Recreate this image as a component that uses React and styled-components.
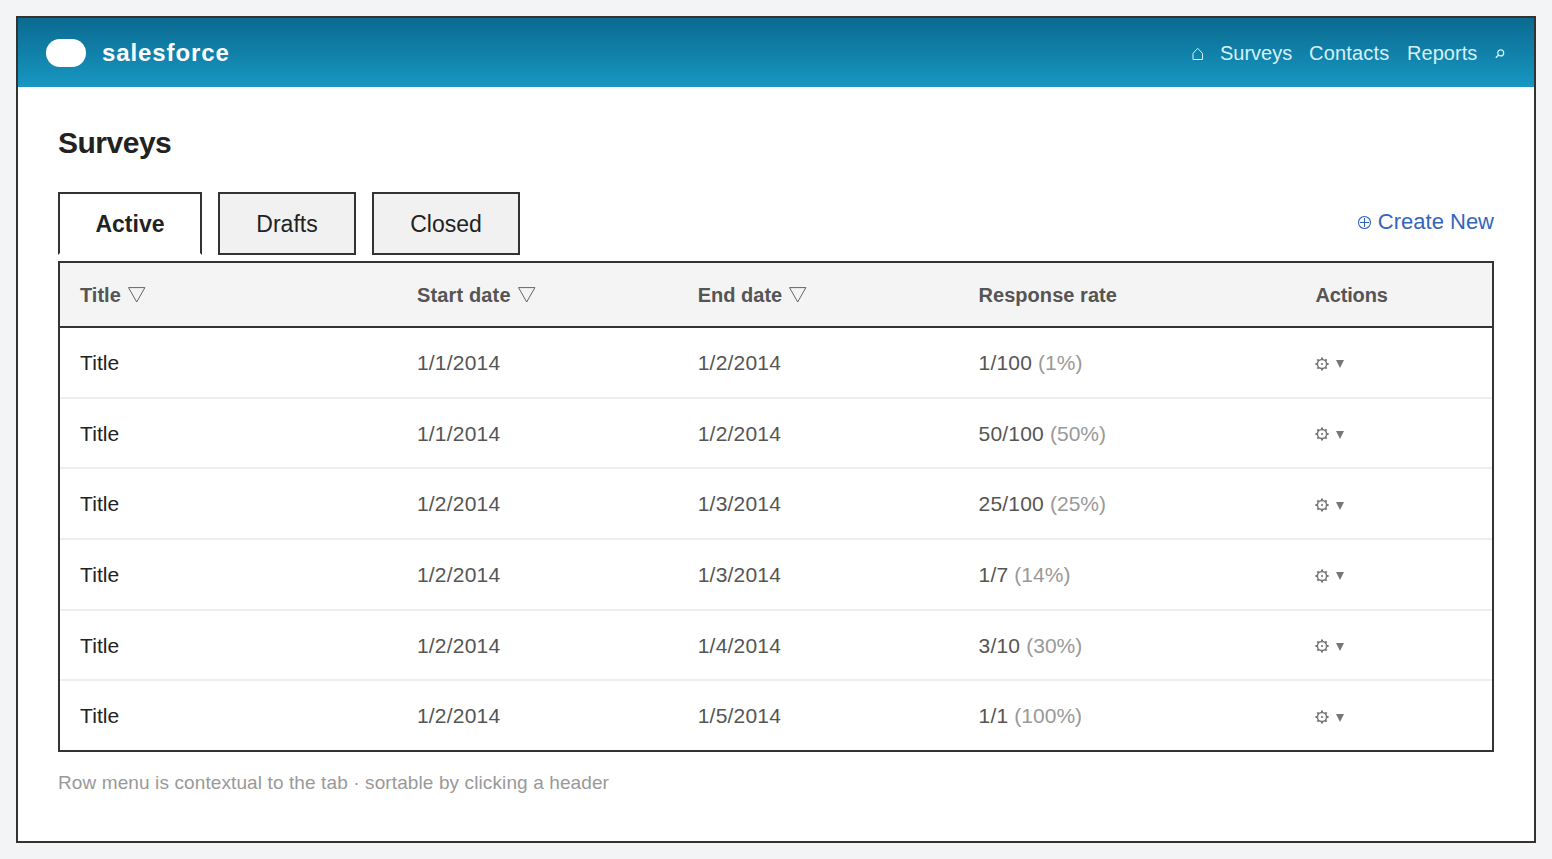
import React, { useState } from 'react';
import styled, { createGlobalStyle, css } from 'styled-components';

const TABS = [
  { name: 'Active', width: 144 },
  { name: 'Drafts', width: 138 },
  { name: 'Closed', width: 148 },
];

const COLUMNS = [
  { label: 'Title', sortable: true },
  { label: 'Start date', sortable: true, spacing: 0.15 },
  { label: 'End date', sortable: true },
  { label: 'Response rate', spacing: 0.05 },
  { label: 'Actions', spacing: -0.15 },
];

const SURVEYS = [
  { id: 1, start: '1/1/2014', end: '1/2/2014', count: '1/100', rate: '1%' },
  { id: 2, start: '1/1/2014', end: '1/2/2014', count: '50/100', rate: '50%' },
  { id: 3, start: '1/2/2014', end: '1/3/2014', count: '25/100', rate: '25%' },
  { id: 4, start: '1/2/2014', end: '1/3/2014', count: '1/7', rate: '14%' },
  { id: 5, start: '1/2/2014', end: '1/4/2014', count: '3/10', rate: '30%' },
  { id: 6, start: '1/2/2014', end: '1/5/2014', count: '1/1', rate: '100%' },
];

const HomeIcon = () => (
  <svg width="12" height="14" viewBox="0 0 12 14" fill="none">
    <path d="M2 12.5V6.4L6.7 1.3l4.8 5.1v6.1z" stroke="currentColor" />
  </svg>
);

const SearchIcon = () => (
  <svg width="10" height="10" viewBox="0 0 10 10" fill="none">
    <circle cx="5.7" cy="3.9" r="3" stroke="currentColor" strokeWidth="1.2" />
    <path d="M3.7 6L.8 8.8" stroke="currentColor" strokeWidth="1.5" />
  </svg>
);

const PlusIcon = () => (
  <svg width="14" height="14" viewBox="0 0 14 14" fill="none">
    <circle cx="7.5" cy="7.5" r="6" stroke="currentColor" strokeWidth="1.1" />
    <path d="M7.5 3v9M3 7.5h9" stroke="currentColor" strokeWidth="1.1" />
  </svg>
);

const SortIcon = () => (
  <svg width="18" height="17" viewBox="0 0 18 17" fill="none">
    <path d="M.5 .6h16.4L8.7 15z" stroke="currentColor" strokeWidth="0.9" />
  </svg>
);

const GEAR_ANGLES = [0, 45, 90, 135, 180, 225, 270, 315];

const GearIcon = () => (
  <svg width="14" height="14" viewBox="0 0 14 14" fill="none">
    <circle cx="7" cy="7" r="4.6" stroke="currentColor" strokeWidth="1.5" />
    <circle cx="7" cy="7" r="1.1" fill="currentColor" />
    {GEAR_ANGLES.map(angle => (
      <path
        key={angle}
        d="M7 2.6V.4"
        stroke="currentColor"
        strokeWidth="2"
        transform={`rotate(${angle} 7 7)`}
      />
    ))}
  </svg>
);

const CaretIcon = () => (
  <svg width="8" height="11" viewBox="0 0 8 11">
    <path d="M0 2h8L4 10z" fill="currentColor" />
  </svg>
);

const App = () => {
  const [activeTab, setActiveTab] = useState('Active');

  return (
    <>
      <GlobalStyle />
      <Frame>
        <TopBar>
          <Brand>
            <Cloud />
            <BrandName>salesforce</BrandName>
          </Brand>
          <Nav>
            <NavIcon $width={12}>
              <HomeIcon />
            </NavIcon>
            <NavLink $width={72}>Surveys</NavLink>
            <NavLink $width={81} $spacing={0.2}>
              Contacts
            </NavLink>
            <NavLink $width={71} $spacing={0.05}>
              Reports
            </NavLink>
            <NavIcon $width={10}>
              <SearchIcon />
            </NavIcon>
          </Nav>
        </TopBar>
        <Content>
          <PageTitle>Surveys</PageTitle>
          <Toolbar>
            <Tabs>
              {TABS.map(({ name, width }) => (
                <Tab
                  key={name}
                  $width={width}
                  $active={name === activeTab}
                  onClick={() => setActiveTab(name)}
                >
                  {name}
                </Tab>
              ))}
            </Tabs>
            <CreateLink>
              <PlusIcon />
              <span>Create New</span>
            </CreateLink>
          </Toolbar>
          <Table>
            <HeaderRow>
              {COLUMNS.map(({ label, sortable, spacing }) => (
                <HeaderCell key={label} $spacing={spacing}>
                  {label}
                  {sortable && <SortIcon />}
                </HeaderCell>
              ))}
            </HeaderRow>
            {SURVEYS.map(({ id, start, end, count, rate }) => (
              <Row key={id}>
                <TitleCell>Title</TitleCell>
                <Cell>{start}</Cell>
                <Cell>{end}</Cell>
                <Cell>
                  {count} <Rate>({rate})</Rate>
                </Cell>
                <ActionCell>
                  <GearIcon />
                  <CaretIcon />
                </ActionCell>
              </Row>
            ))}
          </Table>
          <Note>
            Row menu is contextual to the tab · sortable by clicking a header
          </Note>
        </Content>
      </Frame>
    </>
  );
};

const GlobalStyle = createGlobalStyle`
  * {
    box-sizing: border-box;
  }

  body {
    margin: 0;
    background-color: #f3f4f6;
    font-family: 'Liberation Sans', Arial, sans-serif;
    color: #222;
  }
`;

const FlexRow = css`
  display: flex;
  align-items: center;
`;

const Frame = styled.div`
  height: calc(100vh - 32px);
  margin: 16px;
  border: 2px solid #333;
  background-color: #fff;
`;

const TopBar = styled.header`
  ${FlexRow};
  justify-content: space-between;
  height: 69px;
  padding: 0 29px 0 28px;
  background: linear-gradient(#0b6a90, #1797c2);
`;

const Brand = styled.div`
  ${FlexRow};
  gap: 16px;
`;

const Cloud = styled.span`
  width: 40px;
  height: 28px;
  border-radius: 14px;
  background-color: #fff;
`;

const BrandName = styled.span`
  color: #fff;
  font-size: 24px;
  font-weight: 700;
  letter-spacing: 0.9px;
`;

const Nav = styled.nav`
  ${FlexRow};
  gap: 17px;
  padding-top: 2px;
  color: #d3f1fa;
`;

const NavIcon = styled.span`
  ${FlexRow};
  width: ${props => props.$width}px;
  height: 20px;
`;

const NavLink = styled.a`
  width: ${props => props.$width}px;
  font-size: 20px;
  letter-spacing: ${props => props.$spacing || 0}px;
  white-space: nowrap;
`;

const Content = styled.main`
  padding: 38px 40px 0;
`;

const PageTitle = styled.h1`
  margin: 0 0 31px;
  font-size: 30px;
  line-height: 36px;
  letter-spacing: -0.5px;
`;

const Toolbar = styled.div`
  display: flex;
  justify-content: space-between;
  align-items: flex-start;
  margin-bottom: 6px;
`;

const Tabs = styled.div`
  display: flex;
  gap: 16px;
`;

const Tab = styled.button`
  width: ${props => props.$width}px;
  height: 63px;
  padding: 2px 0 0;
  border: 2px solid #333;
  border-bottom-color: ${props => (props.$active ? '#fff' : '#333')};
  background-color: ${props => (props.$active ? '#fff' : '#f1f1f1')};
  color: #222;
  font-family: inherit;
  font-size: 23px;
  font-weight: ${props => (props.$active ? 700 : 400)};
`;

const CreateLink = styled.a`
  ${FlexRow};
  gap: 7px;
  height: 60px;
  color: #3366bb;
  font-size: 22px;
`;

const Table = styled.div`
  border: 2px solid #333;
`;

const TableGrid = css`
  display: grid;
  grid-template-columns: 1.2fr 1fr 1fr 1.2fr 0.7fr;
`;

const HeaderRow = styled.div`
  ${TableGrid};
  height: 65px;
  border-bottom: 2px solid #333;
  background-color: #f4f4f4;
`;

const Row = styled.div`
  ${TableGrid};
  height: 70.65px;
  border-bottom: 2px solid #eee;

  &:last-child {
    height: 68.75px;
    border-bottom: 0;
  }
`;

const Cell = styled.div`
  ${FlexRow};
  padding: 1.4px 0 0 20px;
  color: #555;
  font-size: 21px;
  letter-spacing: 0.2px;
  white-space: pre;
`;

const HeaderCell = styled(Cell)`
  gap: 7px;
  padding-top: 2px;
  font-size: 20px;
  font-weight: 700;
  letter-spacing: ${props => props.$spacing || 0}px;
`;

const TitleCell = styled(Cell)`
  color: #222;
  letter-spacing: 0.1px;
`;

const ActionCell = styled(Cell)`
  gap: 7px;
  padding-top: 3px;
  color: #777;
`;

const Rate = styled.span`
  color: #999;
  letter-spacing: 0;
`;

const Note = styled.p`
  margin: 20px 0 0;
  color: #999;
  font-size: 19px;
  line-height: 22px;
  letter-spacing: 0.11px;
`;

export default App;
